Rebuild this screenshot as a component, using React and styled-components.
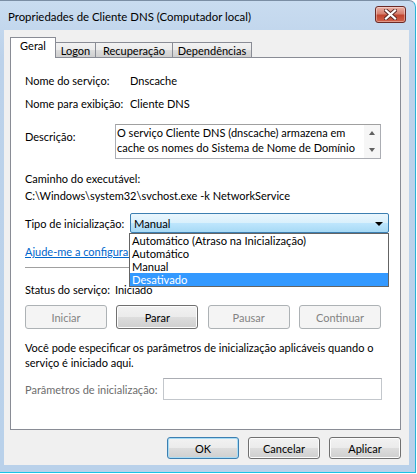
import React from "react";
import styled, { createGlobalStyle } from "styled-components";

const FONT = `Lato, "Noto Sans", sans-serif`;

const GlobalStyle = createGlobalStyle`
  html, body {
    margin: 0;
    padding: 0;
    background: #ffffff;
  }
  body {
    font-family: ${FONT};
    font-size: 11px;
    color: #000;
  }
`;

const tabs = [
  { label: "Geral", width: 46 },
  { label: "Logon", width: 41 },
  { label: "Recuperação", width: 78 },
  { label: "Dependências", width: 80 },
];

const dropdownItems = [
  "Automático (Atraso na Inicialização)",
  "Automático",
  "Manual",
  "Desativado",
];

export default function App() {
  return (
    <>
      <GlobalStyle />
      <Window>
        <TitleBar>
          <Title>Propriedades de Cliente DNS (Computador local)</Title>
          <CloseButton aria-label="Fechar">
            <svg width="13" height="11" viewBox="0 0 13 11">
              <path d="M2 1.5 L11 9.5 M11 1.5 L2 9.5" stroke="#5b2a26" strokeWidth="4" strokeLinecap="square" />
              <path d="M2 1.5 L11 9.5 M11 1.5 L2 9.5" stroke="#ffffff" strokeWidth="2.2" strokeLinecap="square" />
            </svg>
          </CloseButton>
        </TitleBar>

        <Client>
          <TabStrip>
            {tabs.map((t, i) => (
              <Tab key={t.label} $active={i === 0} $w={t.width}>
                {t.label}
              </Tab>
            ))}
          </TabStrip>

          <Panel>
            <InfoRow>
              <span>Nome do serviço:</span>
              <span>Dnscache</span>
            </InfoRow>
            <InfoRow $gap={8}>
              <span>Nome para exibição:</span>
              <span>Cliente DNS</span>
            </InfoRow>

            <DescRow>
              <DescLabel>Descrição:</DescLabel>
              <DescBox>
                <DescText>
                  <span>O serviço Cliente DNS (dnscache) armazena em</span>
                  <span>cache os nomes do Sistema de Nome de Domínio</span>
                </DescText>
                <ScrollTrack>
                  <Arrow $up />
                  <Arrow />
                </ScrollTrack>
              </DescBox>
            </DescRow>

            <Line $top={12}>Caminho do executável:</Line>
            <Line $top={2}>C:\Windows\system32\svchost.exe -k NetworkService</Line>

            <ComboRow>
              <span>Tipo de inicialização:</span>
              <Combo>
                <span>Manual</span>
                <ComboArrow />
              </Combo>
            </ComboRow>

            <HelpLink href="#">Ajude-me a configurar opções de inicialização.</HelpLink>
            <Separator />

            <StatusRow>
              <span>Status do serviço:</span>
              <span>Iniciado</span>
            </StatusRow>

            <ServiceButtons>
              <Button disabled>Iniciar</Button>
              <Button>Parar</Button>
              <Button disabled>Pausar</Button>
              <Button disabled>Continuar</Button>
            </ServiceButtons>

            <Paragraph>
              Você pode especificar os parâmetros de inicialização aplicáveis quando o
              <br />
              serviço é iniciado aqui.
            </Paragraph>

            <ParamsRow>
              <DisabledLabel>Parâmetros de inicialização:</DisabledLabel>
              <ParamsInput disabled />
            </ParamsRow>

            <DropdownList>
              {dropdownItems.map((item) => (
                <DropdownItem key={item} $selected={item === "Desativado"}>
                  {item}
                </DropdownItem>
              ))}
            </DropdownList>
          </Panel>

          <Footer>
            <Button $wide $default>OK</Button>
            <Button $wide>Cancelar</Button>
            <Button $wide>Aplicar</Button>
          </Footer>
        </Client>
      </Window>
    </>
  );
}

const Window = styled.div`
  width: 415px;
  height: 471px;
  display: flex;
  flex-direction: column;
  background: linear-gradient(180deg, #c9dcf0 0%, #bcd2ea 12%, #b9d1ea 100%);
  border-top: 1px solid #7b8ea4;
  border-right: 1px solid #2ab3d6;
  border-bottom: 1px solid #19c3e6;
  border-top-right-radius: 7px;
`;

const TitleBar = styled.div`
  height: 29px;
  flex-shrink: 0;
  display: flex;
  align-items: center;
  justify-content: space-between;
  padding: 0 9px 0 8px;
`;

const Title = styled.span`
  font-family: ${FONT};
  font-size: 11.4px;
  color: #000;
  margin-top: 1px;
`;

const CloseButton = styled.div`
  width: 29px;
  height: 15px;
  margin-top: -2px;
  display: flex;
  align-items: center;
  justify-content: center;
  border: 1px solid #6b2a26;
  border-radius: 3px;
  background: linear-gradient(180deg, #eab1a6 0%, #d7806f 45%, #c1452f 55%, #d0624a 100%);
  box-shadow: inset 0 0 0 1px rgba(255, 255, 255, 0.35);
`;

const Client = styled.div`
  flex: 1;
  display: flex;
  flex-direction: column;
  margin: 0 6px 7px 4px;
  padding: 0 8px 0 6px;
  background: #f0f0f0;
`;

const TabStrip = styled.div`
  display: flex;
  align-items: flex-end;
  height: 21px;
  margin-top: 7px;
  margin-bottom: -1px;
  position: relative;
  z-index: 1;
`;

const Tab = styled.div`
  width: ${(p) => p.$w}px;
  height: ${(p) => (p.$active ? 21 : 16)}px;
  box-sizing: border-box;
  padding-top: 2px;
  text-align: center;
  margin-left: ${(p) => (p.$active ? 0 : -1)}px;
  border: 1px solid #898c95;
  border-bottom: ${(p) => (p.$active ? "none" : "1px solid #898c95")};
  background: ${(p) =>
    p.$active
      ? "#ffffff"
      : "linear-gradient(180deg, #f2f2f2 0%, #ebebeb 50%, #dddddd 51%, #cfcfcf 100%)"};
  line-height: 12px;
  white-space: nowrap;
`;

const Panel = styled.div`
  position: relative;
  height: 373px;
  box-sizing: border-box;
  flex-shrink: 0;
  background: #ffffff;
  border: 1px solid #898c95;
  padding: 15px 0 0 14px;
  display: flex;
  flex-direction: column;
  line-height: 15px;
  white-space: nowrap;
`;

const InfoRow = styled.div`
  display: grid;
  grid-template-columns: 105px auto;
  margin-top: ${(p) => p.$gap || 0}px;
`;

const DescRow = styled.div`
  display: grid;
  grid-template-columns: 90px 266px;
  margin-top: 13px;
`;

const DescLabel = styled.span`
  padding-top: 5px;
`;

const DescBox = styled.div`
  height: 35px;
  box-sizing: border-box;
  border: 1px solid #abadb3;
  border-top-color: #a0a0a0;
  display: flex;
  background: #fff;
`;

const DescText = styled.div`
  flex: 1;
  display: flex;
  flex-direction: column;
  padding: 0 0 0 1px;
  overflow: hidden;
`;

const ScrollTrack = styled.div`
  width: 16px;
  flex-shrink: 0;
  display: flex;
  flex-direction: column;
  justify-content: space-between;
  align-items: center;
  padding: 6px 0 6px;
  box-sizing: border-box;
  background: #f6f6f6;
`;

const Arrow = styled.div`
  width: 0;
  height: 0;
  border-left: 3.5px solid transparent;
  border-right: 3.5px solid transparent;
  ${(p) =>
    p.$up ? "border-bottom: 4px solid #606060;" : "border-top: 4px solid #606060;"}
`;

const Line = styled.div`
  margin-top: ${(p) => p.$top}px;
`;

const ComboRow = styled.div`
  display: grid;
  grid-template-columns: 105px 259px;
  align-items: center;
  margin-top: 10px;
`;

const Combo = styled.div`
  height: 20px;
  box-sizing: border-box;
  border: 1px solid #3c7fb1;
  border-radius: 2px;
  display: flex;
  align-items: center;
  justify-content: space-between;
  padding: 0 5px 0 3px;
  background: linear-gradient(180deg, #eaf6fd 0%, #d9f0fc 49%, #bee6fd 50%, #a7d9f5 100%);
  font-size: 11.2px;
`;

const ComboArrow = styled.div`
  width: 0;
  height: 0;
  border-left: 4px solid transparent;
  border-right: 4px solid transparent;
  border-top: 4px solid #000;
  margin-top: 1px;
`;

const HelpLink = styled.a`
  margin-top: 11px;
  align-self: flex-start;
  color: #0066cc;
  text-decoration: underline;
`;

const Separator = styled.div`
  width: 358px;
  height: 1px;
  margin-top: 8px;
  background: #a0a0a0;
  border-bottom: 1px solid #ffffff;
`;

const StatusRow = styled.div`
  display: flex;
  gap: 5px;
  margin-top: 13px;
`;

const ServiceButtons = styled.div`
  display: flex;
  justify-content: space-between;
  width: 356px;
  margin-top: 8px;
`;

const Button = styled.button`
  width: ${(p) => (p.$wide ? 72 : 82)}px;
  height: ${(p) => (p.$wide ? 22 : 24)}px;
  padding: 0;
  font-family: ${FONT};
  font-size: 11px;
  color: #000;
  border: 1px solid ${(p) => (p.$default ? "#3c7fb1" : "#707070")};
  border-radius: 3px;
  background: linear-gradient(180deg, #f2f2f2 0%, #ebebeb 50%, #dddddd 51%, #cfcfcf 100%);
  box-shadow: inset 0 0 0 1px ${(p) => (p.$default ? "#a8dcf5" : "#fcfcfc")};

  &:disabled {
    color: #838383;
    border-color: #adb2b5;
    background: #f4f4f4;
    box-shadow: none;
  }
`;

const Paragraph = styled.p`
  margin: 11px 0 0;
`;

const ParamsRow = styled.div`
  display: grid;
  grid-template-columns: 138px 219px;
  align-items: center;
  margin-top: 8px;
`;

const DisabledLabel = styled.span`
  color: #6d6d6d;
`;

const ParamsInput = styled.input`
  height: 22px;
  box-sizing: border-box;
  margin: 0;
  border: 1px solid #c3c7cc;
  border-top-color: #abadb3;
  background: #ffffff;
`;

const DropdownList = styled.div`
  position: absolute;
  left: 118px;
  top: 175px;
  width: 260px;
  box-sizing: border-box;
  border: 1px solid #646464;
  background: #ffffff;
  display: flex;
  flex-direction: column;
`;

const DropdownItem = styled.div`
  height: 13px;
  line-height: 13px;
  padding-left: 2px;
  font-size: 11.2px;
  background: ${(p) => (p.$selected ? "#3399ff" : "transparent")};
  color: ${(p) => (p.$selected ? "#ffffff" : "#000000")};
`;

const Footer = styled.div`
  display: flex;
  justify-content: flex-end;
  gap: 9px;
  margin-top: 7px;
`;
